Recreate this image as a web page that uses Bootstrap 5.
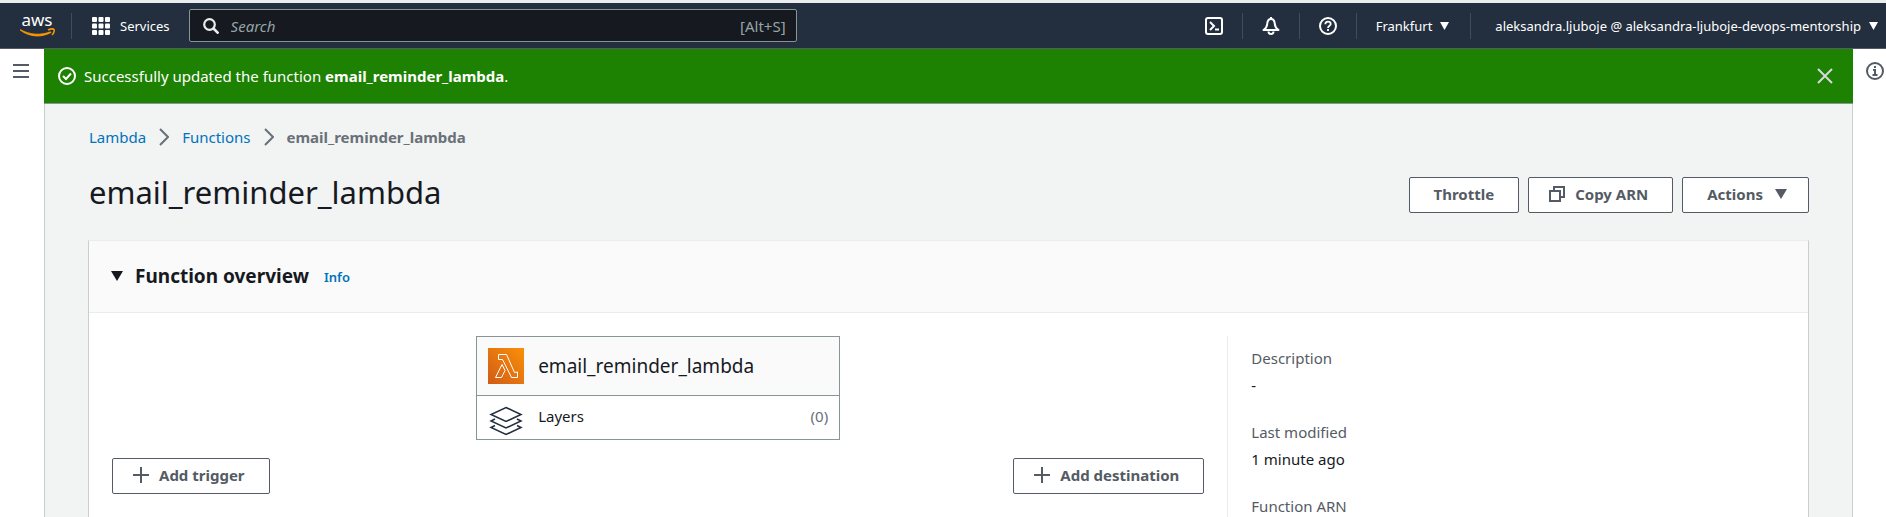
<!DOCTYPE html>
<html lang="en">
<head>
<meta charset="utf-8">
<meta name="viewport" content="width=device-width, initial-scale=1">
<title>email_reminder_lambda - Lambda</title>
<link href="https://cdn.jsdelivr.net/npm/bootstrap@5.3.0/dist/css/bootstrap.min.css" rel="stylesheet">
<style>
  body { font-family: "Noto Sans", "Open Sans", sans-serif; font-size: 15px; line-height: 24px; color: #16191f; background: #fff; }
  svg { display: block; flex: none; }
  a { color: #0073bb; text-decoration: none; }

  /* top bar */
  .topbar { height: 49px; background: #232f3e; border-top: 3px solid #eaeded; border-bottom: 1px solid #545b64; font-size: 13px; line-height: 20px; color: #fff; }
  .topbar .btn, .topbar a { color: #fff; font-size: 13px; line-height: 20px; padding: 0; border: 0; }
  .rule { width: 1px; height: 26px; background: #414d5c; flex: none; }
  .services { gap: 10px; }
  .searchbox { width: 608px; height: 33px; background: #16191f; border: 1px solid #879596; border-radius: 2px; color: #95a5a6; font-size: 15px; padding: 0 10px 0 13px; gap: 12px; margin-left: 19px; }
  .searchbox input { background: transparent; border: 0; outline: 0; color: #95a5a6; min-width: 0; padding: 0; }
  .searchbox input::placeholder { color: #95a5a6; font-style: italic; opacity: 1; }
  .account-area .rule { margin: 0 19px; }
  .account-area .rule-account { margin: 0 24px 0 21px; }
  .menu-text { padding-bottom: 2px; }

  /* page frame */
  .rail-left { width: 44px; padding: 15px 0 0 13px; }
  .rail-right { width: 33px; padding: 13px 0 0 13px; }
  .rail-left .btn, .rail-right .btn, .flash .btn { padding: 0; border: 0; display: block; }
  .flash { height: 55px; background: #1d8102; border-bottom: 1px solid #879596; color: #fff; padding: 0 20px 1px 14px; }
  .workspace { background: #f2f3f3; border: solid #c8cfcf; border-width: 0 1px; padding: 21px 43px 0 43px; }
  .crumbs { color: #687078; gap: 13px; padding-left: 1px; }
  .muted { color: #687078; }
  .page-title { font-size: 31px; line-height: 38px; font-weight: 400; padding-left: 1px; }
  .page-actions { gap: 9px; padding-top: 4px; }

  .btn-console { --bs-btn-color: #545b64; --bs-btn-bg: #fff; --bs-btn-border-color: #545b64; --bs-btn-hover-color: #16191f; --bs-btn-hover-bg: #fafafa; --bs-btn-hover-border-color: #16191f; --bs-btn-border-radius: 2px; --bs-btn-font-size: 15px; --bs-btn-line-height: 24px; --bs-btn-font-weight: 700; height: 36px; padding: 0 24px 2px; display: inline-flex; align-items: center; white-space: nowrap; }
  .btn-iconed { padding-left: 20px; gap: 10px; }
  .btn-menu { padding-right: 21px; gap: 12px; }

  .panel { background: #fff; border: 1px solid #c8cfcf; border-top-color: #eaeded; margin-top: 27px; }
  .panel-top { height: 72px; background: #fafafa; border-bottom: 1px solid #eaeded; padding: 0 22px 2px; }
  .panel-top h2 { font-size: 19px; line-height: 24px; font-weight: 700; margin: 0; }
  .panel-top .info { font-size: 13px; font-weight: 600; padding-top: 3px; margin-left: 15px; }
  .panel-main { padding: 23px; }
  .designer { padding-right: 23px; }
  .designer-actions { margin-top: 18px; }
  .fn-box { width: 364px; border: 1px solid #879596; }
  .fn-name { height: 59px; background: #fafafa; border-bottom: 1px solid #879596; padding: 0 11px; font-size: 19px; gap: 14px; }
  .fn-layers { height: 43px; padding: 0 11px 4px; gap: 14px; }
  .fn-layers svg { margin-top: 10px; }
  .details { border-left: 1px solid #eaeded; padding: 10px 23px 0; min-height: 220px; }
  .details dt { font-weight: 400; color: #545b64; margin-bottom: 3px; }
  .details dd { margin-bottom: 23px; }
</style>
</head>
<body class="vh-100 overflow-hidden d-flex flex-column">

<header class="topbar d-flex align-items-center flex-shrink-0">
  <a href="#" aria-label="AWS" class="ms-3 ps-1">
    <svg width="35" height="42" viewBox="0 -11 35 42">
      <text x="17" y="10" text-anchor="middle" font-family="Noto Sans, sans-serif" font-size="17" fill="#fff">aws</text>
      <path d="M0 14C10 21.500 22 21.500 31 16.500L30.500 15.800C21 19.500 10 19 .500 13.700Z" fill="#f90" stroke="#f90" stroke-width=".8"/>
      <path d="M28 14c3-1.500 5.500-1.200 6 -.5.600 1.200-.4 4-2 5.500" fill="none" stroke="#f90" stroke-width="1.500"/>
    </svg>
  </a>
  <span class="rule mx-3"></span>
  <button type="button" class="btn services d-flex align-items-center ms-1">
    <svg width="18" height="18" fill="#fff"><g id="dots"><rect width="5" height="5" rx="1"/><rect x="6.500" width="5" height="5" rx="1"/><rect x="13" width="5" height="5" rx="1"/></g><use href="#dots" y="6.500"/><use href="#dots" y="13"/></svg>
    <span>Services</span>
  </button>
  <div class="searchbox d-flex align-items-center">
    <svg width="16" height="16" fill="none" stroke="#eaeded" stroke-width="2.200"><circle cx="6.500" cy="6.500" r="5.300"/><path d="M10.500 10.500l5 5" stroke-width="2.600"/></svg>
    <input type="search" class="flex-grow-1" placeholder="Search" aria-label="Search">
    <span>[Alt+S]</span>
  </div>

  <div class="account-area d-flex align-items-center ms-auto">
    <button type="button" class="btn" aria-label="CloudShell"><svg width="18" height="18" fill="none" stroke="#fff" stroke-width="2"><rect x="1" y="1" width="16" height="16" rx="2"/><path d="M5 5l4 4-4 4M10 12.500h4"/></svg></button>
    <span class="rule"></span>
    <button type="button" class="btn" aria-label="Notifications"><svg width="18" height="18" fill="none" stroke="#fff" stroke-width="2"><path d="M1.500 13C4 11.500 5 9.500 5.200 7 5.400 4 6.800 2 9 2s3.600 2 3.800 5c.2 2.500 1.200 4.500 3.700 6z" stroke-linejoin="round"/><path d="M6.500 14.500a2.500 2.500 0 0 0 5 0M9 0v2"/></svg></button>
    <span class="rule"></span>
    <button type="button" class="btn" aria-label="Help"><svg width="18" height="18" fill="none" stroke="#fff" stroke-width="2"><circle cx="9" cy="9" r="8"/><path d="M6.300 7.200C6.300 5.300 7.500 4.600 9 4.600s2.700.8 2.700 2.300C11.700 8.800 9 8.700 9 11M9 12v2" stroke-width="1.800"/></svg></button>
    <span class="rule"></span>
    <button type="button" class="btn menu-text d-flex align-items-center gap-2">Frankfurt
      <svg width="9" height="8" fill="#fff"><path d="M0 0h9L4.500 8z"/></svg></button>
    <span class="rule rule-account"></span>
    <button type="button" class="btn menu-text d-flex align-items-center gap-2 me-2">aleksandra.ljuboje @ aleksandra-ljuboje-devops-mentorship
      <svg width="9" height="8" fill="#fff"><path d="M0 0h9L4.500 8z"/></svg></button>
  </div>
</header>

<div class="d-flex flex-grow-1">
  <nav class="rail-left flex-shrink-0" aria-label="Service menu">
    <button type="button" class="btn" aria-label="Open navigation"><svg width="16" height="14" stroke="#545b64" stroke-width="2"><path d="M0 1h16M0 7h16M0 13h16"/></svg></button>
  </nav>

  <div class="flex-grow-1 d-flex flex-column">
    <div class="flash d-flex align-items-center" role="status">
      <svg width="18" height="18" fill="none" stroke="#fff" stroke-width="2"><circle cx="9" cy="9" r="8"/><path d="M5 9l3 3 5-5.500"/></svg>
      <span class="ms-2">Successfully updated the function <strong class="fw-bold">email_reminder_lambda</strong>.</span>
      <button type="button" class="btn ms-auto" aria-label="Dismiss"><svg width="16" height="16" fill="none" stroke="#d5dbdb" stroke-width="2"><path d="M1 1l14 14M15 1L1 15"/></svg></button>
    </div>

    <main class="workspace flex-grow-1">
      <nav class="crumbs d-flex align-items-center" aria-label="Breadcrumb">
        <a href="#">Lambda</a>
        <svg width="10" height="18" fill="none" stroke="#687078" stroke-width="2"><path d="M1 1l8 8-8 8"/></svg>
        <a href="#">Functions</a>
        <svg width="10" height="18" fill="none" stroke="#687078" stroke-width="2"><path d="M1 1l8 8-8 8"/></svg>
        <strong class="fw-bold">email_reminder_lambda</strong>
      </nav>

      <div class="d-flex justify-content-between mt-4">
        <h1 class="page-title mb-0">email_reminder_lambda</h1>
        <div class="page-actions d-flex">
          <button type="button" class="btn btn-console">Throttle</button>
          <button type="button" class="btn btn-console btn-iconed"><svg width="16" height="16" fill="none" stroke="#545b64" stroke-width="2"><path d="M5 4V1h10v10h-3"/><path d="M1 5h10v10H1z"/></svg>Copy ARN</button>
          <button type="button" class="btn btn-console btn-menu">Actions<svg width="12" height="10" fill="#545b64"><path d="M0 0h12L6 10z"/></svg></button>
        </div>
      </div>

      <section class="panel">
        <header class="panel-top d-flex align-items-center">
          <svg width="12" height="10" fill="#16191f"><path d="M0 0h12L6 10z"/></svg>
          <h2 class="ms-2 ps-1">Function overview</h2>
          <a href="#" class="info">Info</a>
        </header>
        <div class="panel-main">
          <div class="row g-0">
            <div class="col-8 designer">
              <div class="fn-box mx-auto">
                <div class="fn-name d-flex align-items-center">
                  <svg width="36" height="36"><defs><linearGradient id="amber" x1="0" y1="1" x2="1" y2="0"><stop stop-color="#d05c17"/><stop offset="1" stop-color="#fa9008"/></linearGradient></defs><rect width="36" height="36" fill="url(#amber)"/><path d="M10.500 6.500h8l8 18 3-.500v5.500h-6L14.500 11.500h-4zM14 16.500l3 6-3.500 7h-6z" fill="none" stroke="#fff"/></svg>
                  <span>email_reminder_lambda</span>
                </div>
                <div class="fn-layers d-flex align-items-center">
                  <svg width="36" height="30" fill="none" stroke="#232f3e" stroke-width="1.500"><path d="M18 1.500L33 8.500l-15 7-15-7zM7 13l-4 2 15 7 15-7-4-2M7 19.500l-4 2 15 7 15-7-4-2"/></svg>
                  <span>Layers</span>
                  <span class="ms-auto muted">(0)</span>
                </div>
              </div>
              <div class="designer-actions d-flex justify-content-between">
                <button type="button" class="btn btn-console btn-iconed"><svg width="16" height="16" stroke="#545b64" stroke-width="2"><path d="M8 0v16M0 8h16"/></svg>Add trigger</button>
                <button type="button" class="btn btn-console btn-iconed"><svg width="16" height="16" stroke="#545b64" stroke-width="2"><path d="M8 0v16M0 8h16"/></svg>Add destination</button>
              </div>
            </div>
            <dl class="col-4 details mb-0">
              <dt>Description</dt><dd>-</dd>
              <dt>Last modified</dt><dd>1 minute ago</dd>
              <dt>Function ARN</dt>
            </dl>
          </div>
        </div>
      </section>
    </main>
  </div>

  <aside class="rail-right flex-shrink-0">
    <button type="button" class="btn" aria-label="Open info panel"><svg width="18" height="18" fill="none" stroke="#545b64" stroke-width="2"><circle cx="9" cy="9" r="8"/><path d="M9 4v2M7 8h2v5M6.500 13h5"/></svg></button>
  </aside>
</div>

<script src="https://cdn.jsdelivr.net/npm/bootstrap@5.3.0/dist/js/bootstrap.bundle.min.js"></script>
</body>
</html>
